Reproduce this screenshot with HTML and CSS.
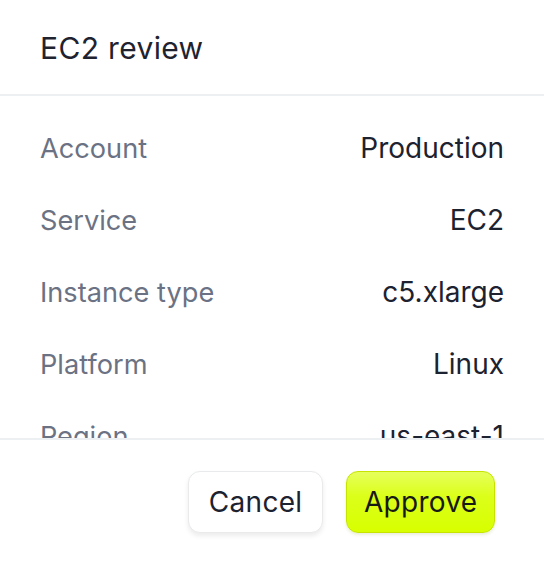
FILE: index.html
```html
<!DOCTYPE html>
<html lang="en">
<head>
<meta charset="utf-8">
<title>EC2 review</title>
<link rel="stylesheet" href="styles.css">
</head>
<body>
<div class="dialog">
  <header class="header">
    <h1 class="title">EC2 review</h1>
  </header>
  <div class="body">
    <dl class="rows">
      <div class="row"><dt class="label">Account</dt><dd class="value">Production</dd></div>
      <div class="row"><dt class="label">Service</dt><dd class="value">EC2</dd></div>
      <div class="row"><dt class="label">Instance type</dt><dd class="value">c5.xlarge</dd></div>
      <div class="row"><dt class="label">Platform</dt><dd class="value">Linux</dd></div>
      <div class="row"><dt class="label">Region</dt><dd class="value">us-east-1</dd></div>
      <div class="row"><dt class="label">Quantity</dt><dd class="value">2</dd></div>
    </dl>
  </div>
  <footer class="footer">
    <button class="btn btn-cancel" type="button">Cancel</button>
    <button class="btn btn-approve" type="button">Approve</button>
  </footer>
</div>
</body>
</html>
```

FILE: styles.css
```css
* { box-sizing: border-box; }
html, body { margin: 0; padding: 0; height: 100%; }
body {
  background: #ffffff;
  font-family: Inter, "Noto Sans", sans-serif;
  color: #1d2230;
}
.dialog {
  width: 544px;
  height: 566px;
  display: flex;
  flex-direction: column;
  overflow: hidden;
}
.header {
  height: 96px;
  flex: none;
  display: flex;
  align-items: center;
  padding: 2px 40px 0;
  border-bottom: 2px solid #edf0f3;
}
.title {
  margin: 0;
  font-size: 30px;
  font-weight: 430;
  color: #1f2330;
  letter-spacing: 0.35px;
}
.body {
  flex: 1;
  overflow: hidden;
  padding: 16px 40px 0;
}
.rows { margin: 0; }
.row {
  display: flex;
  justify-content: space-between;
  align-items: center;
  height: 72px;
}
.label {
  margin: 0;
  font-size: 27.2px;
  font-weight: 400;
  color: #6b7283;
}
.value {
  margin: 0;
  font-size: 28px;
  font-weight: 400;
  color: #1d2230;
}
.footer {
  flex: none;
  height: 128px;
  border-top: 2px solid #edf0f3;
  display: flex;
  justify-content: flex-end;
  align-items: flex-start;
  gap: 23px;
  padding: 31px 49px 0 0;
}
.btn {
  font-family: Inter, "Noto Sans", sans-serif;
  font-size: 28px;
  font-weight: 400;
  height: 62px;
  border-radius: 12px;
  cursor: pointer;
  letter-spacing: 0.3px;
}
.btn-cancel {
  padding: 0 20px;
  background: #ffffff;
  color: #1d2230;
  border: 1.5px solid #e9eaec;
  box-shadow: 0 3px 5px rgba(0, 0, 0, 0.08);
}
.btn-approve {
  padding: 0 16.5px;
  color: #161a12;
  background: linear-gradient(#e6ff5c, #dcff1a 40%, #d8ff00);
  border: 1.5px solid #c6e400;
  box-shadow: 0 2px 3px rgba(120, 140, 0, 0.15);
}
```
